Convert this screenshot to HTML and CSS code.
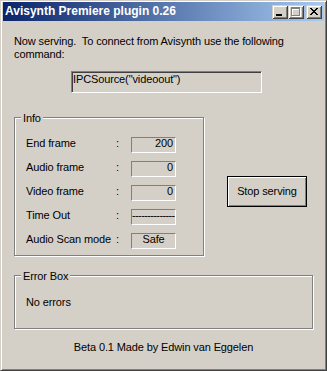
FILE: index.html
```html
<!DOCTYPE html>
<html>
<head>
<meta charset="utf-8">
<link rel="stylesheet" href="styles.css">
</head>
<body>
<div class="window">
  <div class="titlebar">
    <span class="title">Avisynth Premiere plugin 0.26</span>
    <div class="caption-buttons">
      <span class="cap-btn">
        <svg width="16" height="14" viewBox="0 0 16 14" shape-rendering="crispEdges"><rect x="4" y="9" width="6" height="2" fill="#000"/></svg>
      </span>
      <span class="cap-btn">
        <svg width="16" height="14" viewBox="0 0 16 14" shape-rendering="crispEdges"><path fill="#fff" fill-rule="evenodd" d="M4 3h9v9h-9z M5 5v6h7v-6z"/><path fill="#808080" fill-rule="evenodd" d="M3 2h9v9h-9z M4 4v6h7v-6z"/></svg>
      </span>
      <span class="cap-btn close">
        <svg width="16" height="14" viewBox="0 0 16 14" shape-rendering="crispEdges"><path fill="#000" d="M4 3h2v1h-2z M10 3h2v1h-2z M5 4h2v1h-2z M9 4h2v1h-2z M6 5h4v1h-4z M7 6h2v1h-2z M6 7h4v1h-4z M5 8h2v1h-2z M9 8h2v1h-2z M4 9h2v1h-2z M10 9h2v1h-2z"/></svg>
      </span>
    </div>
  </div>
  <div class="client">
    <p class="intro">Now serving.&nbsp; To connect from Avisynth use the following<br>command:</p>
    <div class="edit">IPCSource("videoout")</div>
    <div class="middle">
      <div class="group info">
        <span class="group-label">Info</span>
        <div class="rows">
          <div class="row"><span class="label">End frame</span><span class="colon">:</span><span class="value">200</span></div>
          <div class="row"><span class="label">Audio frame</span><span class="colon">:</span><span class="value">0</span></div>
          <div class="row"><span class="label">Video frame</span><span class="colon">:</span><span class="value">0</span></div>
          <div class="row"><span class="label">Time Out</span><span class="colon">:</span><span class="value dashes">--------------</span></div>
          <div class="row"><span class="label">Audio Scan mode</span><span class="colon">:</span><span class="value center">Safe</span></div>
        </div>
      </div>
      <button class="btn default">Stop serving</button>
    </div>
    <div class="group error">
      <span class="group-label">Error Box</span>
      <div class="error-text">No errors</div>
    </div>
    <div class="footer">Beta 0.1 Made by Edwin van Eggelen</div>
  </div>
</div>
</body>
</html>
```

FILE: styles.css
```css
html, body {
  margin: 0;
  padding: 0;
  background: #D4D0C8;
}

body {
  font-family: "Liberation Sans", Arial, sans-serif;
  font-size: 11px;
  line-height: 13px;
  letter-spacing: -0.12px;
  color: #000;
}

.window {
  width: 327px;
  height: 371px;
  box-sizing: border-box;
  background: #D4D0C8;
  border: 1px solid;
  border-color: #D4D0C8 #404040 #404040 #D4D0C8;
  box-shadow: inset 1px 1px 0 #fff, inset -1px -1px 0 #808080;
  padding: 1px 2px 2px 2px;
  display: flex;
  flex-direction: column;
}

.titlebar {
  height: 19px;
  flex: none;
  display: flex;
  align-items: center;
  justify-content: space-between;
  padding: 0 2px 0 2px;
  background: linear-gradient(to right, #0A246A, #A6CAF0);
}

.title {
  color: #fff;
  font-weight: bold;
  font-size: 12px;
  letter-spacing: 0;
  line-height: 13px;
  white-space: nowrap;
}

.caption-buttons {
  display: flex;
  align-items: center;
  padding-top: 1px;
}

.cap-btn {
  display: block;
  width: 16px;
  height: 14px;
  background: #D4D0C8;
  box-shadow: inset 1px 1px 0 #D4D0C8, inset -1px -1px 0 #404040, inset 2px 2px 0 #fff, inset -2px -2px 0 #808080;
}

.cap-btn svg {
  display: block;
}

.cap-btn.close {
  margin-left: 2px;
}

.client {
  flex: 1;
  display: flex;
  flex-direction: column;
  padding: 0 11px;
}

.intro {
  margin: 14px 0 0 0;
}

.edit {
  margin: 10px 0 0 57px;
  width: 191px;
  height: 22px;
  box-sizing: border-box;
  border: 1px solid;
  border-color: #808080 #fff #fff #808080;
  box-shadow: inset 1px 1px 0 #404040, inset -1px -1px 0 #D4D0C8;
  padding: 1px 1px 0 1px;
  white-space: nowrap;
}

.middle {
  display: flex;
  align-items: flex-start;
  margin-top: 24px;
}

.group {
  box-sizing: border-box;
  border: 1px solid #808080;
  box-shadow: 1px 1px 0 #fff, inset 1px 1px 0 #fff;
  display: flex;
  flex-direction: column;
  align-items: flex-start;
}

.group-label {
  margin: -6px 0 0 6px;
  padding: 0 2px;
  background: #D4D0C8;
}

.info {
  width: 190px;
  height: 139px;
}

.rows {
  margin-top: 12px;
  padding-left: 11px;
  display: flex;
  flex-direction: column;
  gap: 8px;
}

.row {
  display: flex;
  align-items: flex-start;
  height: 16px;
}

.label {
  width: 90px;
  white-space: nowrap;
}

.colon {
  width: 15px;
}

.value {
  width: 45px;
  height: 16px;
  box-sizing: border-box;
  border: 1px solid;
  border-color: #808080 #fff #fff #808080;
  padding: 0 2px;
  line-height: 11px;
  text-align: right;
  white-space: nowrap;
}

.value.center {
  text-align: center;
}

.value.dashes {
  text-align: left;
  padding: 0;
  letter-spacing: -0.62px;
  overflow: hidden;
}

.btn {
  font: inherit;
  letter-spacing: inherit;
  color: #000;
  background: #D4D0C8;
  margin: 59px 0 0 23px;
  width: 80px;
  height: 31px;
  padding: 0;
  box-sizing: border-box;
  border: 1px solid #000;
  box-shadow: inset 1px 1px 0 #fff, inset -1px -1px 0 #808080;
}

.error {
  margin-top: 19px;
  height: 54px;
  width: 100%;
}

.error-text {
  margin: 13px 0 0 11px;
}

.footer {
  margin-top: 12px;
  text-align: center;
}
```
